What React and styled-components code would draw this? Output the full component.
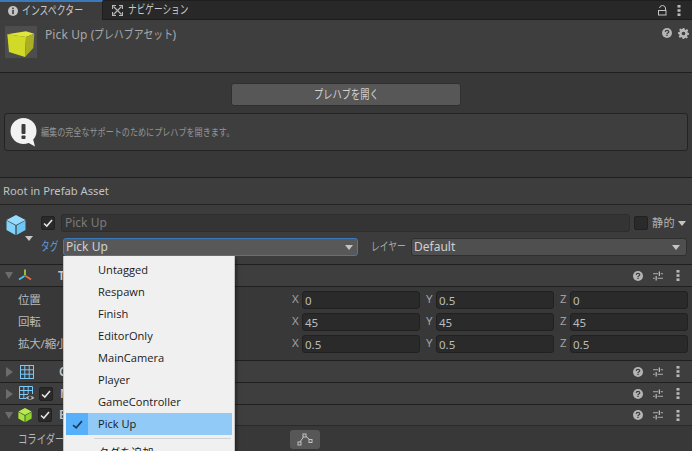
import styled, { createGlobalStyle } from "styled-components";

const GlobalStyle = createGlobalStyle`
  html, body {
    margin: 0;
    height: 451px;
    overflow: hidden;
    background: #383838;
  }
  * {
    box-sizing: border-box;
  }
`;

const Page = styled.div`
  position: relative;
  width: 692px;
  height: 451px;
  overflow: hidden;
  background: #383838;
  color: #c4c4c4;
  font-family: "Noto Sans", "Noto Sans CJK JP", sans-serif;
  font-size: 11.2px;
  line-height: 16px;
`;

// the editor's kana are much narrower than Noto's, so squeeze them
const Narrow = styled.span`
  display: inline-block;
  flex: none;
  width: ${(props) => props.$width}px;
  font-size: ${(props) => props.$size || "12px"};
  white-space: nowrap;
  transform: scaleX(${(props) => props.$scale});
  transform-origin: left center;
`;

const TabBar = styled.div`
  display: flex;
  align-items: stretch;
  height: 20px;
  background: #282828;
  border-top: 1px solid #1e1e1e;
  border-bottom: 1px solid #1c1c1c;
`;

const Tab = styled.div`
  display: flex;
  align-items: center;
  gap: ${(props) => (props.$active ? "4px" : "5px")};
  width: ${(props) => (props.$active ? "103px" : "auto")};
  margin-top: ${(props) => (props.$active ? "-1px" : "0")};
  margin-bottom: ${(props) => (props.$active ? "-1px" : "0")};
  padding-left: ${(props) => (props.$active ? "8px" : "9px")};
  background: ${(props) => (props.$active ? "#3c3c3c" : "transparent")};
  border-top: ${(props) => (props.$active ? "2px solid #3a79bb" : "none")};
  border-right: ${(props) => (props.$active ? "1px solid #1e1e1e" : "none")};
  color: #c8c8c8;
`;

const TabTools = styled.div`
  display: flex;
  align-items: center;
  gap: 10px;
  margin-left: auto;
  padding-right: 11px;
`;

const AssetHeader = styled.div`
  display: flex;
  height: 53px;
  padding: 6px 3px 0 5px;
  background: #3e3e3e;
  border-bottom: 1px solid #1f1f1f;
`;

const Thumb = styled.div`
  flex: none;
  width: 32px;
  height: 32px;
  background: #4d4d4d;
`;

const AssetTitle = styled.div`
  flex: 1;
  padding-left: 8px;
  padding-top: 1px;
  font-size: 12px;
  letter-spacing: 0.1px;
  color: #a8a8a8;
`;

const AssetTools = styled.div`
  display: flex;
  gap: 6px;
  padding-top: 2px;
`;

const PrefabSection = styled.div`
  display: flex;
  flex-direction: column;
  height: 105px;
  padding: 10px 4px 0;
  background: #383838;
  border-bottom: 1px solid #1f1f1f;
`;

const OpenButton = styled.div`
  display: flex;
  align-items: center;
  justify-content: center;
  align-self: center;
  width: 230px;
  height: 23px;
  background: #575757;
  border: 1px solid #303030;
  border-radius: 3px;
  color: #d2d2d2;
`;

const HelpBox = styled.div`
  display: flex;
  align-items: center;
  gap: 4px;
  height: 38px;
  margin-top: 7px;
  padding-left: 5px;
  background: #3e3e3e;
  border: 1px solid #232323;
  border-radius: 3px;
  color: #949494;
`;

const RootBar = styled.div`
  display: flex;
  align-items: center;
  height: 27px;
  padding-left: 3px;
  background: #3d3d3d;
  border-bottom: 1px solid #232323;
  color: #c2c2c2;
`;

const ObjectHeader = styled.div`
  display: flex;
  height: 60px;
  padding: 9px 5px 0 6px;
  background: #3c3c3c;
  border-bottom: 1px solid #1f1f1f;
`;

const ObjectIcon = styled.div`
  position: relative;
  flex: none;
  width: 24px;
  height: 30px;
  margin-top: 1px;
`;

const ObjectArrow = styled.span`
  position: absolute;
  left: 19px;
  top: 21px;
  width: 0;
  height: 0;
  border-left: 4px solid transparent;
  border-right: 4px solid transparent;
  border-top: 5px solid #c8c8c8;
`;

const ObjectFields = styled.div`
  flex: 1;
  display: flex;
  flex-direction: column;
  gap: 6px;
  padding-left: 11px;
`;

const FieldRow = styled.div`
  display: flex;
  align-items: center;
  height: 18px;
`;

const Check = styled.span`
  display: flex;
  align-items: center;
  justify-content: center;
  flex: none;
  width: 14px;
  height: 14px;
  margin-left: ${(props) => props.$left || "0"};
  background: #2a2a2a;
  border: 1px solid #212121;
  border-radius: 2px;
`;

const NameInput = styled.div`
  flex: 1;
  height: 18px;
  margin-left: 6px;
  padding-left: 3px;
  background: #343434;
  border: 1px solid #2d2d2d;
  border-radius: 3px;
  color: #7b7b7b;
  font-size: 12px;
  line-height: 16px;
`;

const StaticLabel = styled.span`
  display: flex;
  align-items: center;
  gap: 3px;
  width: 35px;
  margin-left: 4px;
  color: #b4b4b4;
  letter-spacing: 0.4px;
`;

const TagLabel = styled.span`
  flex: none;
  width: ${(props) => props.$width};
  margin-left: ${(props) => props.$left || "0"};
  color: ${(props) => props.$color};
`;

const Select = styled.div`
  display: flex;
  align-items: center;
  justify-content: space-between;
  flex: ${(props) => (props.$grow ? "1" : "none")};
  width: ${(props) => props.$width || "auto"};
  height: 18px;
  padding: 0 4px 0 2px;
  background: ${(props) => (props.$focused ? "#585858" : "#4f4f4f")};
  border: 1px solid ${(props) => (props.$focused ? "#3a79bb" : "#2f2f2f")};
  border-radius: 3px;
  color: #d0d0d0;
  font-size: 12px;
`;

const DownArrow = styled.span`
  width: 0;
  height: 0;
  border-left: 4px solid transparent;
  border-right: 4px solid transparent;
  border-top: 5px solid #c4c4c4;
  margin-right: ${(props) => props.$right || "0"};
`;

const ComponentHeader = styled.div`
  display: flex;
  align-items: center;
  height: ${(props) => props.$height || "22px"};
  padding: 0 3px 0 5px;
  background: #3e3e3e;
  border-bottom: 1px solid ${(props) => props.$line || "#202020"};
`;

const Fold = styled.span`
  flex: none;
  width: 0;
  height: 0;
  margin-right: ${(props) => (props.$open ? "4px" : "6px")};
  border-style: solid;
  border-color: transparent;
  ${(props) =>
    props.$open
      ? "border-width: 7px 4.5px 0 4.5px; border-top-color: #6c6c6c;"
      : "border-width: 5px 0 5px 7px; border-left-color: #6c6c6c; margin-left: 1px;"}
`;

const ComponentIcon = styled.span`
  display: flex;
  flex: none;
  width: 16px;
  justify-content: center;
`;

const ComponentName = styled.span`
  flex: 1;
  margin-left: ${(props) => props.$offset};
  color: #c8c8c8;
  font-size: 12px;
  font-weight: 600;
`;

const ComponentTools = styled.div`
  display: flex;
  align-items: center;
  gap: 10px;
  padding-right: 9px;
`;

const ToolDots = styled.span`
  display: flex;
  margin-left: 3px;
`;

const TransformBody = styled.div`
  display: flex;
  flex-direction: column;
  gap: 4px;
  height: 74px;
  padding: 4px 4px 0 18px;
  background: #383838;
  border-bottom: 1px solid #1f1f1f;
`;

const VectorRow = styled.div`
  display: flex;
  align-items: center;
  height: 18px;
`;

const RowLabel = styled.span`
  flex: 1;
  color: #b8b8b8;
  font-size: 11.5px;
  letter-spacing: -0.2px;
  white-space: nowrap;
`;

const VectorFields = styled.div`
  display: grid;
  grid-template-columns: repeat(3, 129px);
  gap: 5px;
`;

const AxisField = styled.div`
  display: flex;
  align-items: center;
  gap: 3px;
`;

const AxisLabel = styled.span`
  flex: none;
  width: 8px;
  margin-top: -2px;
  padding-left: 1px;
  color: #a0a0a0;
  font-size: 11.5px;
`;

const NumberInput = styled.div`
  flex: 1;
  height: 18px;
  padding-left: 2px;
  background: #2a2a2a;
  border: 1px solid #212121;
  border-radius: 3px;
  color: #bcbcbc;
  font-size: 11.5px;
  line-height: 17px;
`;

const ColliderRow = styled.div`
  display: flex;
  align-items: center;
  height: 27px;
  padding-left: 18px;
  background: #383838;
  color: #b8b8b8;
`;

const EditButton = styled.div`
  display: flex;
  align-items: center;
  justify-content: center;
  width: 30px;
  height: 19px;
  margin-left: 200px;
  background: #575757;
  border-radius: 3px;
`;

const Menu = styled.div`
  position: absolute;
  left: 63px;
  top: 256px;
  width: 172px;
  height: 210px;
  padding: 3px 2px;
  background: #f0f0f0;
  border: 1px solid #c4c4c4;
  border-top: none;
  box-shadow: 2px 2px 3px rgba(0, 0, 0, 0.35);
  font-family: "Open Sans", "Noto Sans CJK JP", sans-serif;
  font-size: 11.1px;
  color: #1a1a1a;
`;

const MenuItem = styled.div`
  display: flex;
  align-items: center;
  height: 22px;
  background: ${(props) => (props.$selected ? "#91c9f7" : "transparent")};
`;

const MenuCheck = styled.span`
  display: flex;
  align-items: center;
  justify-content: center;
  flex: none;
  width: 22px;
  height: 22px;
  margin-right: 10px;
  background: ${(props) => (props.$selected ? "#56b0fa" : "transparent")};
`;

const MenuSeparator = styled.div`
  height: 1px;
  margin: 3px 1px 3px 28px;
  background: #d2d2d2;
`;

const CheckMark = ({ color = "#e6e6e6", size = 10 }) => (
  <svg width={size} height={size} viewBox="0 0 10 10" fill="none">
    <path d="M1 5.5 L3.8 8 L9 2" stroke={color} strokeWidth="1.6" />
  </svg>
);

const InfoIcon = () => (
  <svg width="10" height="10" viewBox="0 0 10 10">
    <circle cx="5" cy="5" r="5" fill="#c4c4c4" />
    <rect x="4.2" y="1.6" width="1.6" height="1.6" fill="#3c3c3c" />
    <rect x="4.2" y="4" width="1.6" height="4.2" fill="#3c3c3c" />
  </svg>
);

const NavigationIcon = () => (
  <svg width="11" height="11" viewBox="0 0 11 11" fill="none" stroke="#b8b8b8" strokeWidth="1.1">
    <path d="M1.5 1.5 L9.5 9.5 M9.5 1.5 L1.5 9.5" />
    <path d="M0.5 4 V0.5 H4 M7 0.5 H10.5 V4 M10.5 7 V10.5 H7 M4 10.5 H0.5 V7" />
  </svg>
);

const LockIcon = () => (
  <svg width="9" height="11" viewBox="0 0 9 11" fill="none" stroke="#c4c4c4">
    <rect x="0.5" y="5.5" width="7.5" height="4.5" />
    <path d="M1.5 3 Q2 0.5 4.5 0.5 Q7 0.5 7.5 3 V5" />
  </svg>
);

const DotsIcon = () => (
  <svg width="4" height="11" viewBox="0 0 4 11" fill="#b8b8b8">
    <rect x="0.5" y="0" width="3" height="2.6" />
    <rect x="0.5" y="4.2" width="3" height="2.6" />
    <rect x="0.5" y="8.4" width="3" height="2.6" />
  </svg>
);

const HelpIcon = () => (
  <svg width="10" height="10" viewBox="0 0 10 10">
    <circle cx="5" cy="5" r="5" fill="#b4b4b4" />
    <path d="M3.2 3.9 Q3.3 2.4 5 2.4 Q6.8 2.4 6.8 3.8 Q6.8 4.6 5.8 5 Q5 5.3 5 6" fill="none" stroke="#3e3e3e" strokeWidth="1.2" />
    <rect x="4.3" y="6.7" width="1.4" height="1.3" fill="#3e3e3e" />
  </svg>
);

const GearIcon = () => (
  <svg width="11" height="11" viewBox="0 0 24 24">
    <path
      fill="#b8b8b8"
      fillRule="evenodd"
      d="M10 0h4l.6 3.4 2.2.9L19.6 2.4l2.8 2.8-1.9 2.8.9 2.2L24 10.8v3.9l-3.4.6-.9 2.2 1.9 2.8-2.8 2.8-2.8-1.9-2.2.9L13.8 24h-3.9l-.6-3.4-2.2-.9-2.8 1.9-2.8-2.8 1.9-2.8-.9-2.2L0 13.2v-3.9l3.4-.6.9-2.2-1.9-2.8 2.8-2.8 2.8 1.9 2.2-.9zM12 8a4 4 0 1 0 0 8 4 4 0 0 0 0-8z"
    />
  </svg>
);

const SlidersIcon = () => (
  <svg width="10" height="10" viewBox="0 0 11 10" fill="none" stroke="#b8b8b8">
    <path d="M0 2.5 H5.5 M8.5 2.5 H11 M0 7.5 H2 M5 7.5 H11" />
    <path d="M7 0 V5 M3.5 5 V10" strokeWidth="1.4" />
  </svg>
);

const AlertBubble = () => (
  <svg width="27" height="29" viewBox="0 0 27 29">
    <circle cx="13.5" cy="13" r="13" fill="#f2f2f2" />
    <path d="M17 24 L25 28.5 L23 21 Z" fill="#f2f2f2" />
    <rect x="11.5" y="6" width="4" height="10" rx="1" fill="#3c3c3c" />
    <rect x="11.5" y="17.5" width="4" height="3.6" rx="0.8" fill="#3c3c3c" />
  </svg>
);

const PrefabCube = () => (
  <svg width="32" height="32" viewBox="0 0 32 32">
    <path d="M2.3 8.3 L21 5.3 L29.3 7.7 L21 11 Z" fill="#dfe63c" />
    <path d="M2.3 8.3 L21 11 L20 31 L4 26 Z" fill="#d2da28" />
    <path d="M21 11 L29.3 7.7 L28.3 22 L20 31 Z" fill="#a9ae22" />
  </svg>
);

const ObjectCube = ({ size = 20, top = "#97dcfc", left = "#82d2fa", right = "#6cc6f6" }) => (
  <svg width={size} height={size} viewBox="0 0 20 20">
    <path d="M10 0 L19.5 5 L10 10 L0.5 5 Z" fill={top} />
    <path d="M0.5 5.6 L9.4 10.6 V20 L0.5 15 Z" fill={left} />
    <path d="M19.5 5.6 L10.6 10.6 V20 L19.5 15 Z" fill={right} />
  </svg>
);

const TransformIcon = () => (
  <svg width="14" height="13" viewBox="0 0 14 13" fill="none" strokeWidth="1.8">
    <path d="M7 0.5 V6.5" stroke="#9ccc3c" />
    <path d="M6.5 7 L1 10.5" stroke="#4fc3f0" />
    <path d="M7.5 7 L13 10.5" stroke="#ee6a3c" />
  </svg>
);

const GridIcon = () => (
  <svg width="14" height="14" viewBox="0 0 14 14" fill="none" stroke="#7cc8f6">
    <rect x="0.5" y="0.5" width="13" height="13" />
    <path d="M4.8 0.5 V13.5 M9.2 0.5 V13.5 M0.5 4.8 H13.5 M0.5 9.2 H13.5" />
  </svg>
);

const GridEyeIcon = () => (
  <svg width="16" height="15" viewBox="0 0 16 15" fill="none">
    <g stroke="#7cc8f6">
      <path d="M7 12.5 H0.5 V0.5 H13.5 V8" />
      <path d="M4.8 0.5 V12.5 M9.2 0.5 V8 M0.5 4.5 H13.5 M0.5 8.5 H9" />
    </g>
    <path d="M6.5 12 Q11 7.5 15.5 12 Q11 15.5 6.5 12 Z" fill="#b8b8b8" />
    <circle cx="11" cy="11.6" r="1.6" fill="#3e3e3e" />
  </svg>
);

const ColliderCube = () => <ObjectCube size={14} top="#b8ec4e" left="#a4e43c" right="#8fd42c" />;

const EditColliderIcon = () => (
  <svg width="16" height="13" viewBox="0 0 16 13" fill="none" stroke="#c4c4c4">
    <rect x="1" y="9" width="3" height="3" />
    <rect x="6" y="1" width="3" height="3" />
    <rect x="12" y="6.5" width="3" height="3" />
    <path d="M3 9 L6.5 4 M9 3.5 L12.5 6.5" />
  </svg>
);

const HeaderTools = () => (
  <ComponentTools>
    <HelpIcon />
    <SlidersIcon />
    <ToolDots>
      <DotsIcon />
    </ToolDots>
  </ComponentTools>
);

const vectorRows = [
  { label: "位置", values: ["0", "0.5", "0"] },
  { label: "回転", values: ["45", "45", "45"] },
  { label: "拡大/縮小", values: ["0.5", "0.5", "0.5"] },
];

const axes = ["X", "Y", "Z"];

const tags = ["Untagged", "Respawn", "Finish", "EditorOnly", "MainCamera", "Player", "GameController", "Pick Up"];

const App = () => {
  return (
    <Page>
      <GlobalStyle />
      <TabBar>
        <Tab $active>
          <InfoIcon />
          <Narrow $width={62} $scale={0.74}>
            インスペクター
          </Narrow>
        </Tab>
        <Tab>
          <NavigationIcon />
          <Narrow $width={60} $scale={0.72}>
            ナビゲーション
          </Narrow>
        </Tab>
        <TabTools>
          <LockIcon />
          <DotsIcon />
        </TabTools>
      </TabBar>

      <AssetHeader>
        <Thumb>
          <PrefabCube />
        </Thumb>
        <AssetTitle>
          Pick Up (
          <Narrow $width={78} $scale={0.82}>
            プレハブアセット
          </Narrow>
          )
        </AssetTitle>
        <AssetTools>
          <HelpIcon />
          <GearIcon />
        </AssetTools>
      </AssetHeader>

      <PrefabSection>
        <OpenButton>
          <Narrow $width={65} $scale={0.77}>
            プレハブを開く
          </Narrow>
        </OpenButton>
        <HelpBox>
          <AlertBubble />
          <Narrow $width={195} $size="10.5px" $scale={0.77}>
            編集の完全なサポートのためにプレハブを開きます。
          </Narrow>
        </HelpBox>
      </PrefabSection>

      <RootBar>Root in Prefab Asset</RootBar>

      <ObjectHeader>
        <ObjectIcon>
          <ObjectCube />
          <ObjectArrow />
        </ObjectIcon>
        <ObjectFields>
          <FieldRow>
            <Check>
              <CheckMark />
            </Check>
            <NameInput>Pick Up</NameInput>
            <Check $left="4px" />
            <StaticLabel>
              静的
              <DownArrow />
            </StaticLabel>
          </FieldRow>
          <FieldRow>
            <TagLabel $width="22px" $color="#5b9ad8">
              <Narrow $width={17} $scale={0.72}>
                タグ
              </Narrow>
            </TagLabel>
            <Select $focused $width="295px">
              Pick Up
              <DownArrow />
            </Select>
            <TagLabel $width="40px" $left="13px" $color="#a8a8a8">
              <Narrow $width={35} $scale={0.73}>
                レイヤー
              </Narrow>
            </TagLabel>
            <Select $grow>
              Default
              <DownArrow $right="2px" />
            </Select>
          </FieldRow>
        </ObjectFields>
      </ObjectHeader>

      <ComponentHeader>
        <Fold $open />
        <ComponentIcon>
          <TransformIcon />
        </ComponentIcon>
        <ComponentName $offset="25px">T</ComponentName>
        <HeaderTools />
      </ComponentHeader>
      <TransformBody>
        {vectorRows.map((row) => (
          <VectorRow key={row.label}>
            <RowLabel>{row.label}</RowLabel>
            <VectorFields>
              {axes.map((axis, i) => (
                <AxisField key={axis}>
                  <AxisLabel>{axis}</AxisLabel>
                  <NumberInput>{row.values[i]}</NumberInput>
                </AxisField>
              ))}
            </VectorFields>
          </VectorRow>
        ))}
      </TransformBody>

      <ComponentHeader>
        <Fold />
        <ComponentIcon>
          <GridIcon />
        </ComponentIcon>
        <ComponentName $offset="24px">C</ComponentName>
        <HeaderTools />
      </ComponentHeader>
      <ComponentHeader>
        <Fold />
        <ComponentIcon>
          <GridEyeIcon />
        </ComponentIcon>
        <Check $left="4px">
          <CheckMark />
        </Check>
        <ComponentName $offset="7px">M</ComponentName>
        <HeaderTools />
      </ComponentHeader>
      <ComponentHeader $height="21px" $line="#2b2b2b">
        <Fold $open />
        <ComponentIcon>
          <ColliderCube />
        </ComponentIcon>
        <Check $left="5px">
          <CheckMark />
        </Check>
        <ComponentName $offset="7px">B</ComponentName>
        <HeaderTools />
      </ComponentHeader>

      <ColliderRow>
        <Narrow $width={72} $scale={0.78}>
          コライダーの編集
        </Narrow>
        <EditButton>
          <EditColliderIcon />
        </EditButton>
      </ColliderRow>

      <Menu>
        {tags.map((tag) => {
          const selected = tag === "Pick Up";
          return (
            <MenuItem key={tag} $selected={selected}>
              <MenuCheck $selected={selected}>
                {selected && <CheckMark color="#1f3d5c" size={11} />}
              </MenuCheck>
              {tag}
            </MenuItem>
          );
        })}
        <MenuSeparator />
        <MenuItem>
          <MenuCheck />
          タグを追加...
        </MenuItem>
      </Menu>
    </Page>
  );
};

export default App;
